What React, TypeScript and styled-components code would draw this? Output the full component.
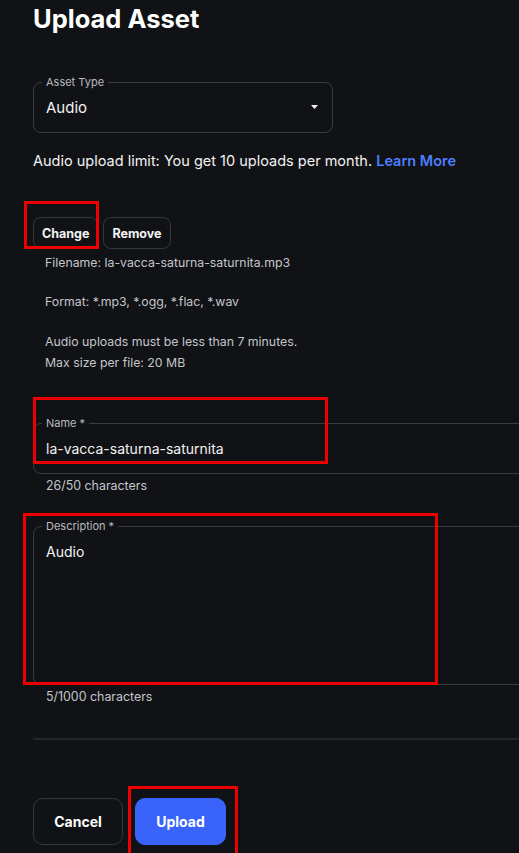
import React from "react";
import styled, { createGlobalStyle } from "styled-components";

const Global = createGlobalStyle`
  html, body { margin: 0; padding: 0; background: #111215; overflow: hidden; }
  body { font-family: Inter, "Noto Sans", sans-serif; color: #f2f2f3; }
`;

const Page = styled.div`
  position: relative;
  width: 600px;
  height: 853px;
  padding-left: 33px;
  box-sizing: border-box;
`;

const Title = styled.h1`
  margin: 0;
  font-size: 25.5px;
  line-height: 38px;
  font-weight: 700;
  color: #ffffff;
`;

const Field = styled.fieldset<{ $w?: string; $h: number; $mt: number }>`
  margin: ${(p) => p.$mt}px 0 0 0;
  padding: 0 12px;
  min-width: 0;
  width: ${(p) => p.$w ?? "600px"};
  height: ${(p) => p.$h}px;
  box-sizing: border-box;
  border: 1px solid #393b40;
  border-radius: 8px;
  position: relative;
`;

const Legend = styled.legend`
  font-size: 11px;
  line-height: 14px;
  color: #b9bbc1;
  padding: 0 4px;
  margin-left: -4px;
`;

const SelectRow = styled.div`
  display: flex;
  align-items: center;
  justify-content: space-between;
  height: 36px;
  padding-right: 2px;
  font-size: 15px;
  color: #f2f2f3;
`;

const Value = styled.div<{ $pt: number }>`
  padding-top: ${(p) => p.$pt}px;
  font-size: 14px;
  line-height: 20px;
  color: #f2f2f3;
`;

const Notice = styled.p`
  margin: 17px 0 0 0;
  font-size: 14.5px;
  line-height: 22px;
  color: #f2f2f3;
`;

const Link = styled.a`
  color: #4c7fff;
  font-weight: 600;
  text-decoration: none;
`;

const ButtonRow = styled.div<{ $mt: number; $gap: number }>`
  display: flex;
  gap: ${(p) => p.$gap}px;
  margin-top: ${(p) => p.$mt}px;
`;

const SmallButton = styled.button`
  height: 32px;
  padding: 0 8px;
  border: 1px solid #34363b;
  border-radius: 8px;
  background: transparent;
  color: #f2f2f3;
  font-family: inherit;
  font-size: 12.5px;
  font-weight: 700;
`;

const BigButton = styled.button<{ $primary?: boolean }>`
  width: ${(p) => (p.$primary ? "91px" : "90px")};
  height: 47px;
  border-radius: 10px;
  border: 1px solid ${(p) => (p.$primary ? "#3a63fb" : "#34363b")};
  background: ${(p) => (p.$primary ? "#3a63fb" : "transparent")};
  color: #ffffff;
  font-family: inherit;
  font-size: 14px;
  font-weight: 700;
`;

const InfoBlock = styled.div`
  padding-left: 12px;
  margin-top: 2px;
  font-size: 12.3px;
  line-height: 20px;
  color: #c4c6cc;
`;

const InfoLine = styled.p<{ $mt: number }>`
  margin: ${(p) => p.$mt}px 0 0 0;
`;

const Helper = styled.div<{ $mt: number }>`
  padding-left: 13px;
  margin-top: ${(p) => p.$mt}px;
  font-size: 12.4px;
  line-height: 18px;
  color: #c4c6cc;
`;

const Divider = styled.hr`
  margin: 32px 0 0 0;
  border: none;
  border-top: 2px solid #25262a;
  width: 600px;
`;

const Mark = styled.div<{ $x: number; $y: number; $w: number; $h: number }>`
  position: absolute;
  left: ${(p) => p.$x}px;
  top: ${(p) => p.$y}px;
  width: ${(p) => p.$w}px;
  height: ${(p) => p.$h}px;
  box-sizing: border-box;
  border: 3px solid #ee0000;
  pointer-events: none;
`;

const Caret = () => (
  <svg width="7" height="4" viewBox="0 0 7 4" aria-hidden>
    <path d="M0 0h7L3.5 4z" fill="#f2f2f3" />
  </svg>
);

export default function App() {
  return (
    <>
      <Global />
      <Page>
        <Title>Upload Asset</Title>
        <Field $w="300px" $h={58} $mt={37}>
          <Legend>Asset Type</Legend>
          <SelectRow>
            <span>Audio</span>
            <Caret />
          </SelectRow>
        </Field>
        <Notice>
          Audio upload limit: You get 10 uploads per month. <Link>Learn More</Link>
        </Notice>
        <ButtonRow $mt={45} $gap={5}>
          <SmallButton>Change</SmallButton>
          <SmallButton>Remove</SmallButton>
        </ButtonRow>
        <InfoBlock>
          <InfoLine $mt={4}>Filename: la-vacca-saturna-saturnita.mp3</InfoLine>
          <InfoLine $mt={19}>Format: *.mp3, *.ogg, *.flac, *.wav</InfoLine>
          <InfoLine $mt={20}>Audio uploads must be less than 7 minutes.</InfoLine>
          <InfoLine $mt={1}>Max size per file: 20 MB</InfoLine>
        </InfoBlock>
        <Field $h={58} $mt={43}>
          <Legend>Name *</Legend>
          <Value $pt={9}>la-vacca-saturna-saturnita</Value>
        </Field>
        <Helper $mt={3}>26/50 characters</Helper>
        <Field $h={166} $mt={24}>
          <Legend>Description *</Legend>
          <Value $pt={9}>Audio</Value>
        </Field>
        <Helper $mt={3}>5/1000 characters</Helper>
        <Divider />
        <ButtonRow $mt={58} $gap={12}>
          <BigButton>Cancel</BigButton>
          <BigButton $primary>Upload</BigButton>
        </ButtonRow>
        <Mark $x={24} $y={201} $w={75} $h={48} />
        <Mark $x={33} $y={397} $w={295} $h={67} />
        <Mark $x={23} $y={513} $w={415} $h={172} />
        <Mark $x={128} $y={786} $w={110} $h={70} />
      </Page>
    </>
  );
}
